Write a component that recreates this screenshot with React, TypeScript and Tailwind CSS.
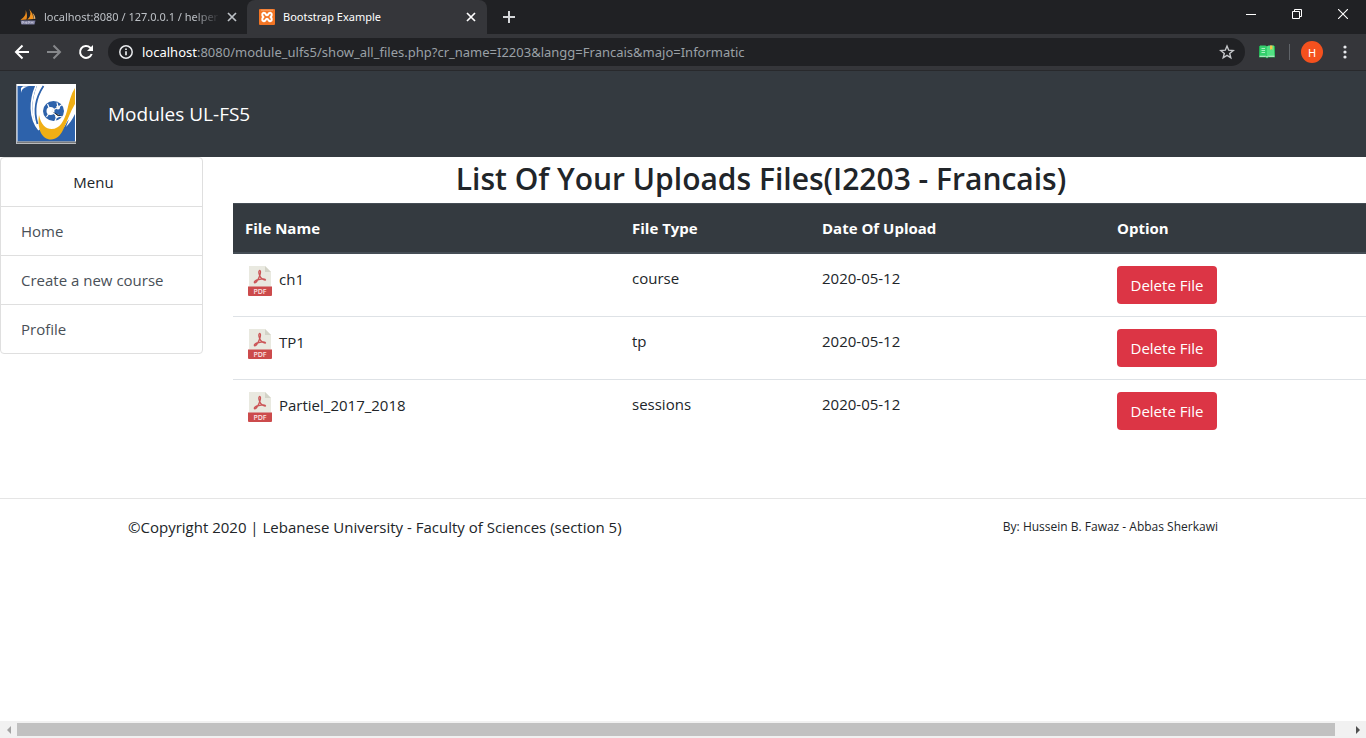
import type { ReactNode } from "react";

const files = [
  { name: "ch1", type: "course", date: "2020-05-12" },
  { name: "TP1", type: "tp", date: "2020-05-12" },
  { name: "Partiel_2017_2018", type: "sessions", date: "2020-05-12" },
];

function IconButton({ label, className, children }: { label: string; className: string; children: ReactNode }) {
  return (
    <button type="button" aria-label={label} className={`flex shrink-0 items-center justify-center ${className}`}>
      {children}
    </button>
  );
}

function CloseIcon() {
  return (
    <svg width="10" height="10" viewBox="0 0 10 10" stroke="currentColor" strokeWidth="1.7">
      <path d="M1 1l8 8M9 1L1 9" />
    </svg>
  );
}

function SailIcon() {
  return (
    <svg width="16" height="16" viewBox="0 0 16 16" className="shrink-0">
      <path d="M5.500 1C6.500 5 4.500 8 .5 11l6-.5C7.500 7 7 3.500 5.500 1z" fill="#e98a1c" />
      <path d="M9 0c2.500 4 1.500 8-1.800 10.600l6-.6C13.500 6 12 3 9 0z" fill="#f5951f" />
      <path d="M12.500 4c1.200 2 1.300 4 .9 6l2-.2C15.300 7 14 5.200 12.500 4z" fill="#e8b36d" />
      <path d="M.5 11.500h15l-1 4h-13z" fill="#77789c" />
      <path d="M2 15v-2.500h1.500V14H2M5 12.500V15M5 13.700h1.500M6.500 12.500V15M8 15v-2.500h1.500V14H8M11 15v-2.500l1 1.500 1-1.500V15" fill="none" stroke="#d0d0dd" strokeWidth=".6" />
    </svg>
  );
}

function XamppIcon() {
  return (
    <svg width="16" height="16" viewBox="0 0 16 16" className="shrink-0">
      <rect width="16" height="16" rx="1" fill="#f37524" />
      <path d="M2 1.200h12" stroke="#fbc4a0" strokeWidth=".6" />
      <path d="M5.500 4C3 3.200 2.600 6.200 4.300 8 2.600 9.800 3 12.800 5.500 12c1.500-.4 1-2.200 2.500-2.200s1 1.800 2.500 2.200c2.500.8 2.900-2.200 1.200-4 1.700-1.800 1.300-4.800-1.200-4C9 4.400 9.500 6.200 8 6.200S7 4.400 5.500 4z" fill="none" stroke="#fff" strokeWidth="2" />
    </svg>
  );
}

function BrowserChrome() {
  return (
    <div className="shrink-0 font-['Noto_Sans',sans-serif]">
      <div className="flex h-[34px] bg-[#202124]">
        <div className="flex w-[247px] shrink-0 items-center pl-5 pr-1.5 text-[#bdc1c6]">
          <SailIcon />
          <span className="ml-2 w-44 overflow-hidden whitespace-nowrap text-[11px] [mask-image:linear-gradient(to_right,black_85%,transparent)]">
            localhost:8080 / 127.0.0.1 / helper
          </span>
          <IconButton label="Close tab" className="ml-1 size-4">
            <CloseIcon />
          </IconButton>
        </div>
        <div className="flex w-60 shrink-0 items-center rounded-t-lg bg-[#35363a] pl-3 pr-2 text-white">
          <XamppIcon />
          <span className="ml-2 flex-1 whitespace-nowrap text-[11px]">Bootstrap Example</span>
          <IconButton label="Close tab" className="size-4">
            <CloseIcon />
          </IconButton>
        </div>
        <IconButton label="New tab" className="ml-3.5 w-4 text-[#d5d7da]">
          <svg width="12" height="12" viewBox="0 0 12 12" stroke="currentColor" strokeWidth="2">
            <path d="M6 0v12M0 6h12" />
          </svg>
        </IconButton>
        <div className="ml-auto flex h-7 text-white">
          <IconButton label="Minimize" className="w-[46px]">
            <svg width="10" height="10" viewBox="0 0 10 10" stroke="currentColor">
              <path d="M0 5.500h10" />
            </svg>
          </IconButton>
          <IconButton label="Restore" className="w-[46px]">
            <svg width="10" height="10" viewBox="0 0 10 10" stroke="currentColor" fill="none">
              <path d="M.5 2.500h7v7h-7zM2.500 2.500v-2h7v7h-2" />
            </svg>
          </IconButton>
          <IconButton label="Close" className="w-[46px]">
            <svg width="10" height="10" viewBox="0 0 10 10" stroke="currentColor" strokeWidth="1.100">
              <path d="M0 0l10 10M10 0L0 10" />
            </svg>
          </IconButton>
        </div>
      </div>
      <div className="flex h-[37px] items-center border-b border-[#28292c] bg-[#35363a] pl-3.5 pr-[13px]">
        <IconButton label="Back" className="size-4 text-white">
          <svg width="16" height="16" viewBox="0 0 16 16" fill="none" stroke="currentColor" strokeWidth="2">
            <path d="M15 8H2.500M8.500 1.500L2 8l6.500 6.500" />
          </svg>
        </IconButton>
        <IconButton label="Forward" className="ml-4 size-4 text-[#86888b]">
          <svg width="16" height="16" viewBox="0 0 16 16" fill="none" stroke="currentColor" strokeWidth="2">
            <path d="M1 8h12.500M7.500 1.500L14 8l-6.500 6.500" />
          </svg>
        </IconButton>
        <IconButton label="Reload" className="ml-4 size-4 text-white">
          <svg width="16" height="16" viewBox="0 0 16 16" fill="none" stroke="currentColor" strokeWidth="2">
            <path d="M13.700 10A6 6 0 1 1 12.300 3.700L14 5.500" />
            <path d="M15 1v6H9z" fill="currentColor" stroke="none" />
          </svg>
        </IconButton>
        <div className="ml-3.5 flex h-7 flex-1 items-center rounded-full bg-[#202124] px-2.5">
          <svg width="16" height="16" viewBox="0 0 16 16" fill="none" stroke="#e8eaed" strokeWidth="1.500" className="shrink-0">
            <circle cx="8" cy="8" r="6.200" />
            <path d="M8 7.200v4M8 4.500v1.500" strokeWidth="1.700" />
          </svg>
          <span className="ml-2 flex-1 whitespace-nowrap text-[13px] text-[#9aa0a6]">
            <span className="text-white">localhost</span>:8080/module_ulfs5/show_all_files.php?cr_name=I2203&amp;langg=Francais&amp;majo=Informatic
          </span>
          <IconButton label="Bookmark" className="size-4 text-[#c6c8cb]">
            <svg width="16" height="16" viewBox="0 0 16 16" fill="none" stroke="currentColor" strokeWidth="1.400">
              <path d="M8 2l1.700 4.200 4.500.3-3.500 2.900 1.100 4.400L8 11.400l-3.800 2.400 1.100-4.400-3.500-2.900 4.500-.3z" />
            </svg>
          </IconButton>
        </div>
        <IconButton label="Reading list" className="ml-3.5 size-4">
          <svg width="16" height="16" viewBox="0 0 16 16">
            <path d="M0 2h16v11.500H9.500L8 14.500l-1.500-1H0z" fill="#1fa64c" />
            <path d="M1 1.500h5.500L8 2.500v10.200l-1.500-.7H.5z" fill="#34cf6c" />
            <path d="M15 1.500H9.500L8 2.500v10.200l1.500-.7h6z" fill="#52e183" />
            <path d="M2.500 4.500h3.500M2.500 6.500h3.500M2.500 8.500h3.500" stroke="#c8f6d8" strokeWidth=".8" />
            <path d="M11 1.500h2.500V6l-1.200-1L11 6z" fill="#f3c64b" />
            <path d="M.5 12.300h6l1.500.8 1.500-.8h6" fill="none" stroke="#dff9e8" strokeWidth=".9" />
          </svg>
        </IconButton>
        <span className="ml-3.5 h-4 w-px bg-[#5f6368]" />
        <button type="button" className="ml-[11px] size-[22px] rounded-full bg-[#f4511e] text-[11px] text-white">
          H
        </button>
        <IconButton label="Browser menu" className="ml-3.5 size-4 text-[#e8eaed]">
          <svg width="4" height="14" viewBox="0 0 4 14" fill="currentColor">
            <circle cx="2" cy="2" r="1.600" />
            <circle cx="2" cy="7" r="1.600" />
            <circle cx="2" cy="12" r="1.600" />
          </svg>
        </IconButton>
      </div>
    </div>
  );
}

function UniversityLogo() {
  return (
    <svg width="60" height="60" viewBox="0 0 60 60" role="img" aria-label="Lebanese University">
      <rect width="60" height="60" fill="#fff" />
      <path d="M1.500 2H21C16 14 14 30 21 43l6 6c10 6 20-2 24-11l8-10v29.500H1.500z" fill="#2d62ab" />
      <path d="M5 9c1-4 3-6 8-6.500L7 2.300 5 4z" fill="#fff" />
      <path d="M20 2c-6 14-7 32 3 44M25 2c-7 13-9 29-2 40" fill="none" stroke="#fff" strokeWidth="1.800" />
      <path d="M27.500 2c-8 12-10 25-6 38" fill="none" stroke="#2d62ab" strokeWidth="1.800" />
      <path d="M29 2c-6 9-9 20-6 30 3 11 8 14 13 14 9 0 13-9 16-20C54 18 56 9 59 5V2z" fill="#fff" />
      <ellipse cx="37.500" cy="27" rx="10.500" ry="10" fill="#2d62ab" />
      <circle cx="34.500" cy="27" r="4" fill="#fff" />
      <circle cx="42" cy="23.500" r="2" fill="#fff" />
      <circle cx="41" cy="32" r="2" fill="#fff" />
      <path d="M34.500 27l-3-7M34.500 27l7.500-3.500 4-3M42 23.500l-1-5M34.500 27l6.500 5 6 1M41 32l-2 5M34.500 27l-4 6" stroke="#fff" strokeWidth="1.200" />
      <path d="M23 31c2 10 7 14 12.500 14C44 45 48 37 51 27c2-9 4-17 8-23v16c-5 8-8 18-12 26-3 6-7 9.500-12 9.500-9 0-14-10-12-24.500z" fill="#f0af15" />
      <path d="M59 22c-4 6-6 14-9 21 3-3 6-7 9-13z" fill="#fff" />
      <path d="M0 58.500h60" stroke="#77797c" strokeWidth="2" />
      <path d="M.5 0v60" stroke="#b9bec6" />
    </svg>
  );
}

function PdfIcon() {
  return (
    <svg width="24" height="30" viewBox="0 0 24 30" className="shrink-0">
      <path d="M1 0h16l6 6v15H1z" fill="#e9e9e0" />
      <path d="M17 0v6h6z" fill="#d3d3c7" />
      <path d="M11.500 4.500c1.500 0 1 3 .3 5-1.200 3-3.300 7.500-5 7.300-1.300-.6 0-2.300 4-3.300 3-.8 6.700-1 6.700.2 0 1-3.200-.2-4.800-2.200-1.700-2-2.500-6.500-1.200-7z" fill="none" stroke="#cb5456" strokeWidth="1.300" />
      <path d="M0 20.500h24V29a1 1 0 0 1-1 1H1a1 1 0 0 1-1-1z" fill="#cc4b4c" />
      <text x="12" y="28" textAnchor="middle" fill="#fbe4e4" className="font-['Open_Sans',sans-serif] text-[7px] font-semibold">
        PDF
      </text>
    </svg>
  );
}

export default function App() {
  return (
    <div className="flex h-screen flex-col overflow-hidden bg-white font-['Open_Sans',sans-serif] text-[15px] leading-6 text-[#212529]">
      <BrowserChrome />
      <div className="flex-1 overflow-hidden">
        <header className="flex items-center bg-[#343a40] px-4 py-[13px]">
          <UniversityLogo />
          <a href="#" className="ml-8 text-[19px] text-white">
            Modules UL-FS5
          </a>
        </header>
        <div className="flex">
          <nav className="w-[203px] shrink-0 self-start divide-y divide-[#dfdfdf] rounded-sm border border-[#dfdfdf]">
            <div className="py-3 pr-4 text-center">Menu</div>
            {["Home", "Create a new course", "Profile"].map((item) => (
              <a key={item} href="#" className="block px-5 py-3 text-[#495057]">
                {item}
              </a>
            ))}
          </nav>
          <main className="ml-[30px] min-w-0 flex-1">
            <h1 className="pt-0.5 pr-[77px] pb-1 text-center text-[30px] leading-10 font-semibold">
              List Of Your Uploads Files(I2203 - Francais)
            </h1>
            <table className="w-full table-fixed text-left">
              <colgroup>
                <col className="w-[387px]" />
                <col className="w-[190px]" />
                <col className="w-[295px]" />
                <col />
              </colgroup>
              <thead className="border-t border-b-2 border-[#454d55] bg-[#343a40] text-white">
                <tr>
                  {["File Name", "File Type", "Date Of Upload", "Option"].map((heading) => (
                    <th key={heading} className="p-3 font-bold">
                      {heading}
                    </th>
                  ))}
                </tr>
              </thead>
              <tbody className="divide-y divide-[#dee2e6]">
                {files.map((file) => (
                  <tr key={file.name} className="align-top">
                    <td className="py-3 pr-3 pl-[15px]">
                      <a href="#" className="flex items-start gap-[7px] leading-[26px]">
                        <PdfIcon />
                        {file.name}
                      </a>
                    </td>
                    <td className="p-3">{file.type}</td>
                    <td className="p-3">{file.date}</td>
                    <td className="p-3">
                      <button type="button" className="h-[38px] w-[100px] rounded-sm bg-[#dc3545] text-white">
                        Delete File
                      </button>
                    </td>
                  </tr>
                ))}
              </tbody>
            </table>
          </main>
        </div>
        <footer className="mt-14 flex items-center justify-between border-t border-[#e5e5e5] pt-4 pr-[148px] pl-32">
          <p>©Copyright 2020 | Lebanese University - Faculty of Sciences (section 5)</p>
          <p className="text-[12px]">By: Hussein B. Fawaz - Abbas Sherkawi</p>
        </footer>
      </div>
      <div className="flex h-[17px] shrink-0 items-center bg-[#f1f1f1]">
        <IconButton label="Scroll left" className="w-[17px]">
          <svg width="4" height="8" viewBox="0 0 4 8" fill="#a3a3a3">
            <path d="M4 0v8L0 4z" />
          </svg>
        </IconButton>
        <div className="mr-3.5 h-[13px] flex-1 bg-[#c1c1c1]" />
        <IconButton label="Scroll right" className="w-[17px]">
          <svg width="4" height="8" viewBox="0 0 4 8" fill="#505050">
            <path d="M0 0v8l4-4z" />
          </svg>
        </IconButton>
      </div>
    </div>
  );
}
